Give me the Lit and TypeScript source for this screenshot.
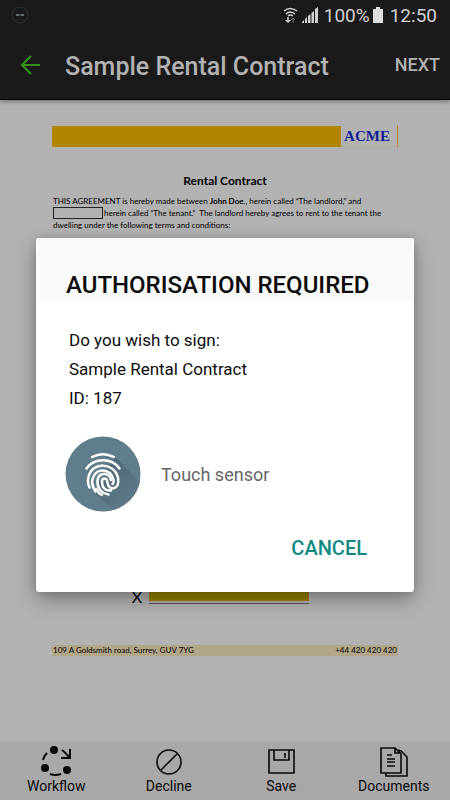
import { LitElement, html, css, svg } from "lit";
import { customElement, property } from "lit/decorators.js";

const navIcons: Record<string, unknown> = {
  workflow: svg`<g fill="currentColor" stroke="none"><circle cx="14" cy="4" r="4"/><circle cx="5" cy="22" r="4"/><circle cx="27" cy="24" r="4"/></g>
    <path d="M3 14Q4 10 7 7M10 28Q15 30 21 28M22 4Q25 6 29 11M30 3V12H21" stroke-width="2"/>`,
  decline: svg`<circle cx="16" cy="16" r="12"/><path d="M24 8L8 24"/>`,
  save: svg`<path d="M4 4H29V27H4ZM9 4V14H24V4M20 7V12"/>`,
  documents: svg`<path d="M3 2H17L23 8V27H3ZM17 2V7H23M20 4L23 5L29 11V30H8V27M9 9H14M9 13H17M9 16H17M9 20H17"/>`,
};

@customElement("status-bar")
class StatusBar extends LitElement {
  static styles = css`
    :host { display: flex; align-items: center; height: 30px; padding: 0 13px 0 11px; color: #cfcfcf; font-size: 19px; }
    .space { flex: 1; }
    .wifi { margin-right: 4px; }
    .bars { margin-right: 6px; }
    .battery { margin: 0 7px 0 3px; }
  `;
  render() {
    return html`
      <svg width="18" height="18" viewBox="0 0 18 18" fill="none"><circle cx="9" cy="9" r="8" stroke="#303030"/><path d="M5 9H8.500M9.500 9H13" stroke="#77868a" stroke-width="1.500"/></svg>
      <span class="space"></span>
      <svg class="wifi" width="15" height="17" viewBox="0 0 15 17" fill="none" stroke="#cfcfcf" stroke-width="1.500"><path d="M1 4Q7 -1 14 4M3 7Q7 3 12 7M5 9Q7 7 10 9"/><path d="M5 10V14"/><path d="M2 13H8L5 16Z" fill="#cfcfcf" stroke="none"/><path d="M10 16V12M8 13L10 11L12 13" stroke="#777" stroke-width="1"/></svg>
      <svg class="bars" width="16" height="16" viewBox="0 0 16 16" fill="#cfcfcf"><path d="M0 16V15L2 13V16ZM3 16V12L5 10V16ZM6 16V9L8.500 7V16ZM9.500 16V6L12 4V16ZM13 16V2L16 0V16Z"/></svg>
      <span>100%</span>
      <svg class="battery" width="10" height="16" viewBox="0 0 10 16" fill="#dedede"><path d="M3 0H7V2H10V16H0V2H3Z"/></svg>
      <span>12:50</span>
    `;
  }
}

@customElement("contract-page")
class ContractPage extends LitElement {
  static styles = css`
    :host { display: flex; flex-direction: column; font-family: Lato, sans-serif; font-size: 8px; line-height: 12px; color: #000; padding: 26px 52px 86px; box-sizing: border-box; }
    .banner { display: flex; height: 21px; border-right: 1px solid #b28500; }
    .gold { flex: 1; background: #b28500; }
    .logo { width: 56px; padding-right: 4px; text-align: center; font: bold 15px/20px "Liberation Serif", serif; color: #161e96; border-bottom: 1px solid #b0aa98; box-sizing: border-box; }
    h2 { margin: 26px 0 6px; font-size: 12px; line-height: 16px; text-align: center; }
    p { margin: 0; padding-left: 1px; white-space: nowrap; }
    .blank { display: inline-block; box-sizing: border-box; width: 50px; height: 12px; border: 1px solid #222; vertical-align: top; padding: 0; margin: 0 1px 0 0; background: none; }
    .space { flex: 1; }
    .sign { display: flex; justify-content: center; gap: 7px; margin-right: 9px; font: 16px/20px Lato, sans-serif; }
    .field { width: 160px; border-bottom: 1px solid #555; height: 16px; }
    .fill { height: 14px; background: #928100; border: 1px solid #b27700; box-sizing: border-box; }
    footer { display: flex; justify-content: space-between; margin-top: 38px; padding: 0 1px; line-height: 11px; background: #b2a689; }
  `;
  render() {
    return html`
      <div class="banner"><div class="gold"></div><div class="logo">ACME</div></div>
      <h2>Rental Contract</h2>
      <p>THIS AGREEMENT is hereby made between <b>John Doe</b>., herein called “The landlord,” and</p>
      <p><input class="blank" aria-label="Tenant name" />herein called “The tenant.”&nbsp; The landlord hereby agrees to rent to the tenant the</p>
      <p>dwelling under the following terms and conditions:</p>
      <div class="space"></div>
      <div class="sign"><span>X</span><div class="field"><div class="fill"></div></div></div>
      <footer><span>109 A Goldsmith road, Surrey, GUV 7YG</span><span>+44 420 420 420</span></footer>
    `;
  }
}

@customElement("nav-item")
class NavItem extends LitElement {
  @property() icon = "";
  @property() label = "";
  static styles = css`
    :host { flex: 1; display: flex; }
    button { flex: 1; display: flex; flex-direction: column; align-items: center; border: 0; padding: 4px 0 0; background: none; color: #080808; font: 14px/16px Roboto, sans-serif; }
  `;
  render() {
    return html`<button><svg width="32" height="32" viewBox="0 0 32 32" fill="none" stroke="currentColor" stroke-width="1.6">${navIcons[this.icon]}</svg>${this.label}</button>`;
  }
}

@customElement("sign-dialog")
class SignDialog extends LitElement {
  static styles = css`
    :host { display: block; box-sizing: border-box; width: 100%; background: #fff; border-radius: 3px; overflow: hidden; color: #0c0c0c; box-shadow: 0 8px 20px rgba(0, 0, 0, .3), 0 0 8px rgba(0, 0, 0, .15); }
    h1 { margin: 0; padding: 32px 30px 0; background: #fafafa; font-size: 24px; line-height: 30px; font-weight: 500; white-space: nowrap; }
    p { margin: 0; padding: 26px 33px 0; font-size: 17px; line-height: 29px; }
    .sensor { display: flex; align-items: center; gap: 20px; padding: 23px 29px 0; font-size: 18px; color: #666; }
    .actions { display: flex; justify-content: flex-end; padding: 20px 39px 28px; }
    button { border: 0; padding: 0 8px; background: none; color: #0e8a82; font: 500 20px/32px Roboto, sans-serif; }
  `;
  render() {
    return html`
      <h1>AUTHORISATION REQUIRED</h1>
      <p>Do you wish to sign:<br />Sample Rental Contract<br />ID: 187</p>
      <div class="sensor">
        <svg width="76" height="76" viewBox="0 0 76 76" fill="none">
          <defs><linearGradient id="shade" x1="0" y1="0" x2="1" y2="1"><stop offset="0.300" stop-color="#526b77"/><stop offset="0.900" stop-color="#607d8b"/></linearGradient></defs>
          <circle cx="38" cy="38" r="37.500" fill="#607d8b"/>
          <path d="M50 21L75 46A38 38 0 0 1 48 74L29 56Z" fill="url(#shade)"/>
          <g stroke="#fff" stroke-width="2.500" stroke-linecap="round">
            <path d="M27 21Q38 15.500 49 21"/>
            <path d="M21.500 32.500C29 21.500 47 21.500 54.500 32.500"/>
            <path d="M24.500 51.500Q22 46 23.500 41C27 25.500 49 26 53 41.500C55.500 55 43 55 42.500 46.500C42 41 37 41.500 37 46C37 52 40.500 55 46 54.500"/>
            <path d="M30.500 55.500C27 50 26.500 44 28.500 40.500C33 31.500 46 33 48.500 43.500Q49 47 47.500 48"/>
            <path d="M43.500 58.500C35.500 57 32 51 32.500 44.500C33.500 36 44 36 46 44"/>
            <path d="M37 59Q33 57 31.500 53"/>
          </g>
        </svg>
        <span>Touch sensor</span>
      </div>
      <div class="actions"><button>CANCEL</button></div>
    `;
  }
}

@customElement("app-root")
class AppRoot extends LitElement {
  static styles = css`
    :host { display: flex; flex-direction: column; position: relative; min-height: 100vh; background: #b2b2b2; font-family: Roboto, sans-serif; }
    .top { background: #1a1a1a; border-bottom: 1px solid #000; box-shadow: 0 2px 4px rgba(0, 0, 0, .3); }
    .bar { display: flex; align-items: center; height: 69px; padding: 0 10px 0 20px; color: #b2b2b2; }
    .bar h1 { flex: 1; margin: 0 0 0 25px; padding-top: 4px; font-size: 25px; line-height: 32px; font-weight: 500; white-space: nowrap; }
    .bar button { border: 0; padding: 0; background: none; color: inherit; font: 500 18px/24px Roboto, sans-serif; }
    .bar .back { display: flex; color: #33911a; }
    contract-page { flex: 1; }
    nav { display: flex; height: 58px; background: #a8a8a8; }
    .overlay { position: absolute; inset: 30px 0 0; display: flex; align-items: center; padding: 0 36px; }
  `;
  render() {
    return html`
      <div class="top">
        <status-bar></status-bar>
        <div class="bar">
          <button class="back" aria-label="Back"><svg width="20" height="20" viewBox="0 0 20 20" fill="none" stroke="currentColor" stroke-width="2.2"><path d="M20 10H2M11 1L2 10L11 19"/></svg></button>
          <h1>Sample Rental Contract</h1>
          <button>NEXT</button>
        </div>
      </div>
      <contract-page></contract-page>
      <nav>
        <nav-item icon="workflow" label="Workflow"></nav-item>
        <nav-item icon="decline" label="Decline"></nav-item>
        <nav-item icon="save" label="Save"></nav-item>
        <nav-item icon="documents" label="Documents"></nav-item>
      </nav>
      <div class="overlay"><sign-dialog role="dialog" aria-label="Authorisation required"></sign-dialog></div>
    `;
  }
}
